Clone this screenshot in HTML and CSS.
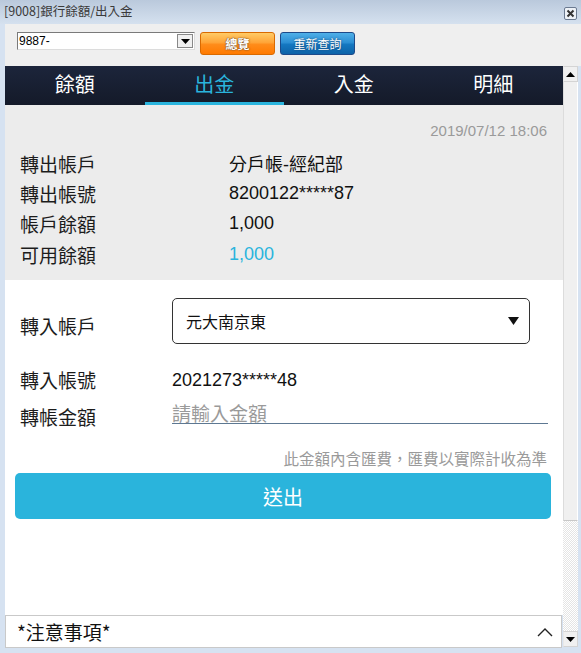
FILE: index.html
```html
<!DOCTYPE html>
<html lang="zh-Hant">
<head>
    <meta charset="UTF-8">
    <meta name="viewport" content="width=device-width, initial-scale=1.0">
    <title>[9008]銀行餘額/出入金</title>
    <link rel="stylesheet" href="styles.css">
</head>
<body>
    <div class="window">
        <!-- Title bar -->
        <div class="titlebar">
            <span class="title">[9008]銀行餘額/出入金</span>
            <span class="close">
                <svg width="13" height="13" viewBox="0 0 13 13">
                    <rect x="0.5" y="0.5" width="12" height="12" rx="1.5" fill="#eef2f7" stroke="#6b7a90"/>
                    <path d="M3.5 3.5 L9.5 9.5 M9.5 3.5 L3.5 9.5" stroke="#333" stroke-width="2"/>
                </svg>
            </span>
        </div>

        <!-- Toolbar -->
        <div class="toolbar">
            <div class="combo">
                <span class="combo-text">9887-</span>
                <span class="combo-btn">
                    <svg width="9" height="5" viewBox="0 0 9 5"><path d="M0 0 H9 L4.5 5 Z" fill="#000"/></svg>
                </span>
            </div>
            <button class="tool-btn orange">總覽</button>
            <button class="tool-btn blue">重新查詢</button>
        </div>

        <div class="viewport">
            <div class="content">
                <!-- Tabs -->
                <nav class="tabs">
                    <a class="tab">餘額</a>
                    <a class="tab active">出金</a>
                    <a class="tab">入金</a>
                    <a class="tab">明細</a>
                </nav>

                <!-- Source account info -->
                <section class="info">
                    <div class="stamp">2019/07/12 18:06</div>
                    <div class="info-grid">
                        <span class="label">轉出帳戶</span><span class="value">分戶帳-經紀部</span>
                        <span class="label">轉出帳號</span><span class="value">8200122*****87</span>
                        <span class="label">帳戶餘額</span><span class="value">1,000</span>
                        <span class="label">可用餘額</span><span class="value cyan">1,000</span>
                    </div>
                </section>

                <!-- Transfer form -->
                <section class="form">
                    <div class="row row-select">
                        <span class="label">轉入帳戶</span>
                        <div class="picker">
                            <span>元大南京東</span>
                            <svg width="11" height="8" viewBox="0 0 11 8"><path d="M0 0 H11 L5.5 8 Z" fill="#111"/></svg>
                        </div>
                    </div>
                    <div class="row row-account">
                        <span class="label">轉入帳號</span>
                        <span class="value">2021273*****48</span>
                    </div>
                    <div class="row row-amount">
                        <span class="label">轉帳金額</span>
                        <input class="amount" placeholder="請輸入金額">
                    </div>
                    <div class="note">此金額內含匯費，匯費以實際計收為準</div>
                    <button class="submit">送出</button>
                </section>

                <!-- Notice footer -->
                <div class="notice">
                    <span>*注意事項*</span>
                    <svg width="16" height="10" viewBox="0 0 16 10"><path d="M1 9 L8 2 L15 9" fill="none" stroke="#222" stroke-width="1.4"/></svg>
                </div>
            </div>

            <!-- Scrollbar -->
            <div class="scrollbar">
                <div class="sb-btn">
                    <svg width="9" height="5" viewBox="0 0 9 5"><path d="M0 5 H9 L4.5 0 Z" fill="#000"/></svg>
                </div>
                <div class="sb-thumb"></div>
                <div class="sb-track"></div>
                <div class="sb-btn">
                    <svg width="9" height="5" viewBox="0 0 9 5"><path d="M0 0 H9 L4.5 5 Z" fill="#000"/></svg>
                </div>
            </div>
        </div>
    </div>
</body>
</html>
```

FILE: styles.css
```css
/* Window frame */
body {
    margin: 0;
    padding: 0;
    font-family: "Liberation Sans", "Noto Sans CJK TC", sans-serif;
    color: #222;
}

.window {
    width: 581px;
    height: 653px;
    background-color: #d6e2f1;
    display: flex;
    flex-direction: column;
    overflow: hidden;
}

.titlebar {
    height: 24px;
    background: linear-gradient(#bac9dc, #d5e1ef);
    display: flex;
    align-items: center;
    justify-content: space-between;
    padding: 0 4px 0 4px;
}

.title {
    font-family: "Noto Sans CJK TC", sans-serif;
    font-size: 12.5px;
    color: #3a3a3a;
    margin-top: -3px;
}

.close {
    display: flex;
    margin-top: 2px;
}

/* Toolbar */
.toolbar {
    height: 42px;
    margin-left: 5px;
    background-color: #efefef;
    display: flex;
    align-items: flex-start;
    padding: 8px 0 0 12px;
    box-sizing: border-box;
}

.combo {
    width: 178px;
    height: 18px;
    box-sizing: border-box;
    background: #fff;
    border: 1px solid #7a7a7a;
    border-right-color: #dcdcdc;
    border-bottom-color: #dcdcdc;
    display: flex;
    align-items: center;
    justify-content: space-between;
}

.combo-text {
    font-size: 12px;
    padding-left: 1px;
    color: #000;
}

.combo-btn {
    width: 16px;
    height: 14px;
    margin-right: 1px;
    background: #f0f0f0;
    border: 1px solid #888;
    box-sizing: border-box;
    display: flex;
    align-items: center;
    justify-content: center;
}

.tool-btn {
    height: 23px;
    width: 75px;
    border-radius: 3px;
    font-family: "Noto Sans CJK TC", sans-serif;
    font-size: 12px;
    font-weight: bold;
    color: #fff;
    padding: 0;
    margin-left: 5px;
    cursor: pointer;
}

.tool-btn.orange {
    background: linear-gradient(#ffcb66 0%, #ffa538 45%, #ff8c1a 55%, #ff7a00 100%);
    border: 1px solid #d96a00;
    text-shadow: 0 0 2px #6b4a2a, 0 0 1px #6b4a2a;
}

.tool-btn.blue {
    width: 75px;
    background: linear-gradient(#4fb0e8 0%, #2c8fd4 45%, #1477c0 55%, #0d63a8 100%);
    border: 1px solid #1d4a8a;
    font-weight: normal;
    text-shadow: 0 0 2px #1e3f66;
}

/* Scroll viewport */
.viewport {
    flex: 1;
    display: flex;
    margin: 0 3px 5px 5px;
}

.content {
    flex: 1;
    display: flex;
    flex-direction: column;
    font-family: "Liberation Sans", "Noto Sans CJK TC", sans-serif;
}

/* Tabs */
.tabs {
    height: 39px;
    background: linear-gradient(#1c253b, #141a29);
    display: flex;
}

.tab {
    flex: 1;
    text-align: center;
    font-family: "Noto Sans CJK TC", sans-serif;
    font-size: 20px;
    line-height: 36px;
    color: #fff;
    border-bottom: 3px solid transparent;
}

.tab.active {
    color: #2ab4dd;
    border-bottom-color: #2ab4dd;
}

/* Info block */
.info {
    background-color: #ececec;
    padding: 16px 16px 11px 15px;
}

.stamp {
    text-align: right;
    font-size: 15px;
    line-height: 20px;
    color: #9a9a9a;
    margin-bottom: 7px;
}

.info-grid {
    display: grid;
    grid-template-columns: 209px 1fr;
    grid-auto-rows: 30.3px;
    align-items: center;
}

.label {
    font-family: "Noto Sans CJK TC", sans-serif;
    font-size: 19px;
    color: #1c1c1c;
}

.value {
    font-size: 18px;
    color: #111;
}

.cyan {
    color: #2ab4dd;
}

/* Form */
.form {
    flex: 1;
    background-color: #fff;
    padding: 18px 12px 0 10px;
}

.row {
    display: grid;
    grid-template-columns: 152px 1fr;
    padding: 0 3px 0 5px;
}

.row-select .label {
    padding-top: 16px;
    line-height: 24px;
}

.picker {
    height: 46px;
    margin-right: 18px;
    box-sizing: border-box;
    border: 1px solid #333;
    border-radius: 5px;
    display: flex;
    align-items: center;
    justify-content: space-between;
    padding: 0 10px 0 13px;
    font-family: "Noto Sans CJK TC", sans-serif;
    font-size: 16px;
    color: #111;
}

.row-account {
    margin-top: 22px;
    align-items: center;
    line-height: 28px;
}

.row-amount {
    margin-top: 5px;
    height: 25px;
}

.row-amount .label {
    padding-top: 4px;
    line-height: 28px;
}

.amount {
    height: 25px;
    padding: 2px 0 0 0;
    box-sizing: border-box;
    border: none;
    border-bottom: 1px solid #5d7892;
    font-family: "Noto Sans CJK TC", sans-serif;
    font-size: 19px;
    line-height: 22px;
    outline: none;
    background: transparent;
}

.amount::placeholder {
    color: #9a9a9a;
}

.note {
    margin-top: 24px;
    padding-right: 4px;
    text-align: right;
    font-family: "Noto Sans CJK TC", sans-serif;
    font-size: 15.5px;
    line-height: 20px;
    color: #9a9a9a;
}

.submit {
    display: block;
    width: 100%;
    height: 46px;
    margin-top: 5px;
    background-color: #2ab4dc;
    border: none;
    border-radius: 5px;
    color: #fff;
    font-family: "Noto Sans CJK TC", sans-serif;
    font-size: 20px;
    cursor: pointer;
}

/* Notice footer */
.notice {
    height: 33px;
    box-sizing: border-box;
    border: 1px solid #c9c9c9;
    margin-right: 1px;
    background-color: #fff;
    display: flex;
    align-items: center;
    justify-content: space-between;
    padding: 0 8px 0 11px;
    font-family: "Noto Sans CJK TC", sans-serif;
    font-size: 19px;
    color: #111;
}

/* Scrollbar */
.scrollbar {
    width: 15px;
    display: flex;
    flex-direction: column;
    padding-bottom: 1px;
}

.sb-btn {
    height: 16px;
    background-color: #f0f0f0;
    border: 1px solid #d4d4d4;
    border-left-color: #e8e8e8;
    box-sizing: border-box;
    display: flex;
    align-items: center;
    justify-content: center;
}

.sb-thumb {
    height: 439px;
    background-color: #f0f0f0;
    border-left: 1px solid #dcdcdc;
    border-right: 1px solid #ffffff;
    border-bottom: 1px solid #c8c8c8;
    box-sizing: border-box;
}

.sb-track {
    flex: 1;
    background: repeating-conic-gradient(#e4e4e4 0 25%, #ffffff 0 50%) 0 0 / 2px 2px;
}
```
